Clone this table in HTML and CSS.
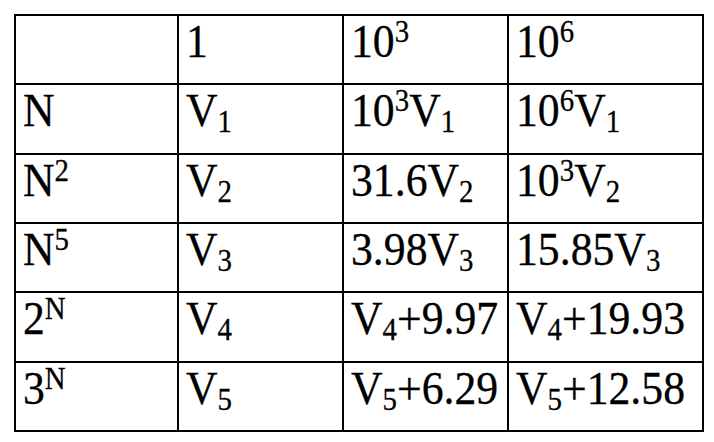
FILE: index.html
```html
<!DOCTYPE html>
<html lang="en">
<head>
	<meta charset="UTF-8"/>
	<title>growth table</title>
	<link rel="stylesheet" href="styles.css">
</head>
<body>
	<table class="growth">
		<colgroup>
			<col class="c-label">
			<col class="c-base">
			<col class="c-mid">
			<col class="c-wide">
		</colgroup>
		<tr>
			<td></td>
			<td><span class="t">1</span></td>
			<td><span class="t">10<sup>3</sup></span></td>
			<td><span class="t">10<sup>6</sup></span></td>
		</tr>
		<tr>
			<td><span class="t">N</span></td>
			<td><span class="t">V<sub>1</sub></span></td>
			<td><span class="t">10<sup>3</sup>V<sub>1</sub></span></td>
			<td><span class="t">10<sup>6</sup>V<sub>1</sub></span></td>
		</tr>
		<tr>
			<td><span class="t">N<sup>2</sup></span></td>
			<td><span class="t">V<sub>2</sub></span></td>
			<td><span class="t">31.6V<sub>2</sub></span></td>
			<td><span class="t">10<sup>3</sup>V<sub>2</sub></span></td>
		</tr>
		<tr>
			<td><span class="t">N<sup>5</sup></span></td>
			<td><span class="t">V<sub>3</sub></span></td>
			<td><span class="t">3.98V<sub>3</sub></span></td>
			<td><span class="t">15.85V<sub>3</sub></span></td>
		</tr>
		<tr>
			<td><span class="t">2<sup>N</sup></span></td>
			<td><span class="t">V<sub>4</sub></span></td>
			<td><span class="t">V<sub>4</sub>+9.97</span></td>
			<td><span class="t">V<sub>4</sub>+19.93</span></td>
		</tr>
		<tr>
			<td><span class="t">3<sup>N</sup></span></td>
			<td><span class="t">V<sub>5</sub></span></td>
			<td><span class="t">V<sub>5</sub>+6.29</span></td>
			<td><span class="t">V<sub>5</sub>+12.58</span></td>
		</tr>
	</table>
</body>
</html>
```

FILE: styles.css
```css
* { margin: 0; padding: 0; }
body { background-color: #fff; }

.growth {
	margin: 14px 0 0 14px;
	width: 690px;
	border-collapse: collapse;
	table-layout: fixed;
	font-family: "Liberation Serif", "Times New Roman", serif;
	font-size: 47px;
	line-height: 50px;
	color: #000;
}
.c-label { width: 163px; }
.c-base { width: 165px; }
.c-mid { width: 165px; }
.c-wide { width: 195px; }

.growth tr { height: 69.33px; }
.growth td {
	border: 2px solid #000;
	padding: 0 0 0 7px;
	vertical-align: top;
	white-space: nowrap;
}

/* the source type is a little narrower than Times at this size */
.t {
	display: inline-block;
	transform: scaleX(0.93);
	transform-origin: left top;
	-webkit-text-stroke: 0.3px #000;
}

sup, sub {
	font-size: 31px;
	line-height: 0;
}
sup { vertical-align: 15px; }
sub { vertical-align: -6px; }
```
